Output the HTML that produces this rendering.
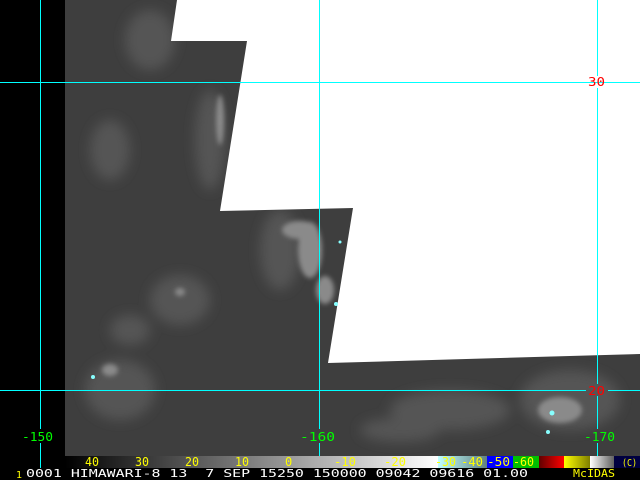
<!DOCTYPE html>
<html><head><meta charset="utf-8"><style>
html,body{margin:0;padding:0;background:#000;}
svg{display:block;}
text{font-family:"DejaVu Sans Mono","Liberation Mono",monospace;}
</style></head><body>
<svg width="640" height="480" viewBox="0 0 640 480" xmlns="http://www.w3.org/2000/svg">
<defs>
<filter id="b" x="-50%" y="-50%" width="200%" height="200%"><feGaussianBlur stdDeviation="6"/></filter>
<filter id="b2" x="-50%" y="-50%" width="200%" height="200%"><feGaussianBlur stdDeviation="2.5"/></filter>
<linearGradient id="cb" x1="0" x2="1" y1="0" y2="0">
<stop offset="0" stop-color="#000"/>
<stop offset="0.1" stop-color="#1a1a1a"/>
<stop offset="0.5" stop-color="#808080"/>
<stop offset="1" stop-color="#fff"/>
</linearGradient>
<linearGradient id="cy" x1="0" x2="1"><stop offset="0" stop-color="#c0ffff"/><stop offset="1" stop-color="#608080"/></linearGradient>
<linearGradient id="rd" x1="0" x2="1"><stop offset="0" stop-color="#600000"/><stop offset="1" stop-color="#ff0000"/></linearGradient>
<linearGradient id="yl" x1="0" x2="1"><stop offset="0" stop-color="#ffff00"/><stop offset="1" stop-color="#808000"/></linearGradient>
<linearGradient id="gr" x1="0" x2="1"><stop offset="0" stop-color="#fff"/><stop offset="1" stop-color="#606060"/></linearGradient>
</defs>
<rect width="640" height="480" fill="#000"/>
<rect x="65" y="0" width="575" height="456" fill="#3e3e3e"/>
<g filter="url(#b)" fill="#545454">
<ellipse cx="150" cy="40" rx="25" ry="30"/>
<ellipse cx="110" cy="150" rx="20" ry="30"/>
<ellipse cx="180" cy="300" rx="30" ry="25"/>
<ellipse cx="120" cy="390" rx="35" ry="30"/>
<ellipse cx="210" cy="140" rx="15" ry="50"/>
<ellipse cx="280" cy="250" rx="20" ry="40"/>
<ellipse cx="450" cy="410" rx="60" ry="20"/>
<ellipse cx="570" cy="400" rx="50" ry="30"/>
<ellipse cx="130" cy="330" rx="20" ry="15"/>
<ellipse cx="400" cy="430" rx="40" ry="12"/>
</g>
<g filter="url(#b2)" fill="#8a8a8a">
<ellipse cx="220" cy="120" rx="4" ry="25"/>
<ellipse cx="310" cy="250" rx="12" ry="28"/>
<ellipse cx="325" cy="290" rx="9" ry="14"/>
<ellipse cx="300" cy="230" rx="18" ry="9"/>
<ellipse cx="560" cy="410" rx="22" ry="13"/>
<ellipse cx="110" cy="370" rx="8" ry="6"/>
<ellipse cx="180" cy="292" rx="5" ry="4"/>
</g>
<polygon points="177,0 640,0 640,354 328,363 353,208 220,211 247,41 171,41" fill="#fff"/>
<g fill="#8ff">
<circle cx="93" cy="377" r="2"/><circle cx="336" cy="304" r="2"/><circle cx="340" cy="242" r="1.5"/>
<circle cx="552" cy="413" r="2.5"/><circle cx="548" cy="432" r="2"/>
</g>
<g stroke="#00ffff" stroke-width="1">
<line x1="0" y1="82.5" x2="640" y2="82.5"/>
<line x1="0" y1="390.5" x2="586" y2="390.5"/>
<line x1="608" y1="390.5" x2="640" y2="390.5"/>
<line x1="40.5" y1="0" x2="40.5" y2="429"/>
<line x1="40.5" y1="443" x2="40.5" y2="468"/>
<line x1="319.5" y1="0" x2="319.5" y2="429"/>
<line x1="319.5" y1="443" x2="319.5" y2="468"/>
<line x1="597.5" y1="0" x2="597.5" y2="76"/>
<line x1="597.5" y1="88" x2="597.5" y2="384"/>
<line x1="597.5" y1="396" x2="597.5" y2="429"/>
<line x1="597.5" y1="443" x2="597.5" y2="468"/>
</g>
<g font-size="12" fill="#ff0000">
<text x="588" y="86" textLength="17" lengthAdjust="spacingAndGlyphs">30</text>
<text x="588" y="395" textLength="17" lengthAdjust="spacingAndGlyphs">20</text>
</g>
<g font-size="12" fill="#00ff00">
<text x="22" y="441" textLength="31" lengthAdjust="spacingAndGlyphs">-150</text>
<text x="300" y="441" textLength="35" lengthAdjust="spacingAndGlyphs">-160</text>
<text x="584" y="441" textLength="31" lengthAdjust="spacingAndGlyphs">-170</text>
</g>
<rect x="65" y="456" width="373" height="12" fill="url(#cb)"/>
<rect x="438" y="456" width="49" height="12" fill="url(#cy)"/>
<rect x="487" y="456" width="26" height="12" fill="#0000ff"/>
<rect x="513" y="456" width="26" height="12" fill="#00c000"/>
<rect x="539" y="456" width="25" height="12" fill="url(#rd)"/>
<rect x="564" y="456" width="26" height="12" fill="url(#yl)"/>
<rect x="590" y="456" width="24" height="12" fill="url(#gr)"/>
<rect x="614" y="456" width="26" height="12" fill="#000040"/>
<g font-size="12" fill="#ffff00">
<text x="85" y="466" textLength="14" lengthAdjust="spacingAndGlyphs">40</text>
<text x="135" y="466" textLength="14" lengthAdjust="spacingAndGlyphs">30</text>
<text x="185" y="466" textLength="14" lengthAdjust="spacingAndGlyphs">20</text>
<text x="235" y="466" textLength="14" lengthAdjust="spacingAndGlyphs">10</text>
<text x="285" y="466">0</text>
<text x="334" y="466" textLength="22" lengthAdjust="spacingAndGlyphs">-10</text>
<text x="384" y="466" textLength="22" lengthAdjust="spacingAndGlyphs">-20</text>
<text x="435" y="466" textLength="21" lengthAdjust="spacingAndGlyphs">-30</text>
<text x="461" y="466" textLength="22" lengthAdjust="spacingAndGlyphs">-40</text>
<text x="487" y="466" textLength="23" lengthAdjust="spacingAndGlyphs">-50</text>
<text x="513" y="466" textLength="21" lengthAdjust="spacingAndGlyphs">-60</text>
<text x="622" y="466" font-size="10" textLength="15" lengthAdjust="spacingAndGlyphs">(C)</text>
</g>
<text x="16" y="478" font-size="10" fill="#ffff00">1</text>
<text x="26" y="477" font-size="11" fill="#fff" xml:space="preserve" textLength="502" lengthAdjust="spacingAndGlyphs">0001 HIMAWARI-8 13  7 SEP 15250 150000 09042 09616 01.00</text>
<text x="573" y="477" font-size="11" fill="#ffff00" textLength="42" lengthAdjust="spacingAndGlyphs">McIDAS</text>
</svg>
</body></html>
